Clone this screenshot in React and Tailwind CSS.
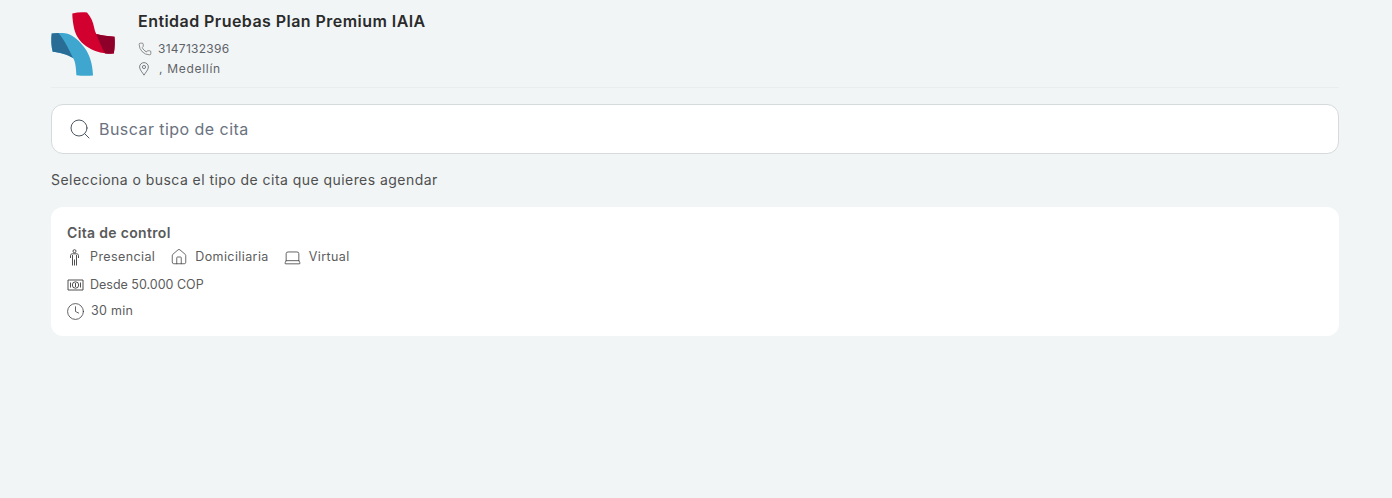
import { Phone, Search, House, Laptop, Clock } from 'lucide-react'

const FONT = "font-['Inter','Liberation_Sans',sans-serif]"

function Logo() {
  return (
    <svg width="64" height="64" viewBox="0 0 64 64" className="shrink-0">
      <path d="M21.3 1.5 C26 .3 31 .1 36 .5 C40 5 42 10 43 15 C43.6 18 44.3 20 45.3 22 C51 23.5 57 24.3 63.5 24.8 C64 30 63.8 36 62.8 41.6 C50 42 42 39 35.3 34.3 C28 29 24.5 23 23 16 C22 11 21.3 6 21.3 1.5 Z" fill="#d2002e" />
      <path d="M45.3 22 C51 23.5 57 24.3 63.5 24.8 C64 30 63.8 36 62.8 41.6 C60 41.8 57 41.8 54 41.4 C50.5 35 47.5 28.5 45.3 22 Z" fill="#8e0029" />
      <path d="M.7 21.6 C5 20.9 10 20.8 14 21.2 C21 22 28 28 33.7 36 C38 42 41.5 50 42 63.5 C37 64 31 64 25.4 63.3 C25 56 24.6 50 22 46 C16 42 8 40.5 1.7 39.7 C.2 34 0 27.5 .7 21.6 Z" fill="#3ea6cf" />
      <path d="M.7 21.6 C3 21.2 5.2 21 7.3 21 C12 26 17 35 22 46 C16 42 8 40.5 1.7 39.7 C.2 34 0 27.5 .7 21.6 Z" fill="#296c95" />
    </svg>
  )
}

function PinIcon() {
  return (
    <svg width="12" height="14" viewBox="0 0 12 14" fill="none" stroke="#5f6368" strokeWidth="0.8">
      <path d="M6 13.2 C4.6 10.6 1.6 7.8 1.6 5 A4.4 4.4 0 0 1 10.4 5 C10.4 7.8 7.4 10.6 6 13.2 Z" />
      <circle cx="6" cy="5" r="1.6" />
    </svg>
  )
}

function PersonIcon() {
  return (
    <svg width="15" height="17" viewBox="0 0 15 17" fill="none" stroke="#3c3c3c" strokeWidth="0.9">
      <circle cx="7.5" cy="2.2" r="1.5" />
      <path d="M3.5 9 V6.6 C3.5 5.4 4.4 4.8 5.4 4.8 H9.6 C10.6 4.8 11.5 5.4 11.5 6.6 V9 M5.5 6 V16.5 M9.5 6 V16.5 M7.5 10.5 V16.5" />
    </svg>
  )
}

function CashIcon() {
  return (
    <svg width="17" height="12" viewBox="0 0 17 12" fill="none" stroke="#3c3c3c" strokeWidth="0.9">
      <path d="M1 1 H16 V11 H1 Z" />
      <circle cx="8.5" cy="6" r="3.2" />
      <path d="M8.5 4 V8 M3.5 3.5 V8.5 M13.5 3.5 V8.5" />
    </svg>
  )
}

function Modality({ icon, label }) {
  return (
    <div className="flex items-center gap-2">
      {icon}
      <span className="text-[12.5px] leading-5 tracking-[0.4px] text-[#5c5c5c]">{label}</span>
    </div>
  )
}

export default function App() {
  return (
    <div className={`${FONT} min-h-[498px] bg-[#f1f5f6] pl-[51px] pr-[53px]`}>
      {/* Entidad */}
      <header className="flex h-[88px] gap-[23px] border-b border-[#e9edee] pt-[11px]">
        <div className="pt-px">
          <Logo />
        </div>
        <div className="min-w-0">
          <h1 className="text-base leading-5 font-semibold tracking-[0.45px] text-[#2b2b2b]">Entidad Pruebas Plan Premium IAIA</h1>
          <div className="mt-[8px] flex h-5 items-center gap-[6px] text-xs tracking-[0.27px] text-[#5f6368]">
            <Phone size={14} strokeWidth={1} className="text-[#4a4a4a]" />
            <span>3147132396</span>
          </div>
          <div className="flex h-5 items-center gap-2 text-xs tracking-[0.7px] text-[#5f6368]">
            <PinIcon />
            <span className="ml-px">, Medellín</span>
          </div>
        </div>
      </header>

      {/* Buscador */}
      <div className="mt-4 flex h-[50px] items-center gap-[7px] rounded-xl border border-[#d5dadc] bg-white pl-4">
        <Search size={24} strokeWidth={1} className="text-[#4b5563]" />
        <span className="text-base tracking-[0.45px] text-[#6b7280]">Buscar tipo de cita</span>
      </div>

      <p className="mt-4 text-sm leading-5 tracking-[0.45px] text-[#4f4f4f]">Selecciona o busca el tipo de cita que quieres agendar</p>

      {/* Tipo de cita */}
      <div className="mt-[17px] h-[129px] rounded-xl bg-white px-4 pt-4">
        <h2 className="text-sm leading-5 font-semibold tracking-[0.33px] text-[#5a5a5a]">Cita de control</h2>
        <div className="mt-[3px] flex h-[22px] items-center gap-4">
          <Modality icon={<PersonIcon />} label="Presencial" />
          <Modality icon={<House size={18} strokeWidth={1} className="-mx-px text-[#3c3c3c]" />} label="Domiciliaria" />
          <Modality icon={<Laptop size={19} strokeWidth={1} className="-mx-[1.5px] text-[#3c3c3c]" />} label="Virtual" />
        </div>
        <div className="mt-[6px] flex h-[22px] items-center gap-[6px]">
          <CashIcon />
          <span className="text-[12.5px] text-[#5c5c5c]">Desde 50.000 COP</span>
        </div>
        <div className="mt-1 flex h-[22px] items-center gap-2">
          <Clock size={19} strokeWidth={1} className="-mx-[1.5px] text-[#3c3c3c]" />
          <span className="text-[12.5px] tracking-[0.3px] text-[#5c5c5c]">30 min</span>
        </div>
      </div>
    </div>
  )
}
